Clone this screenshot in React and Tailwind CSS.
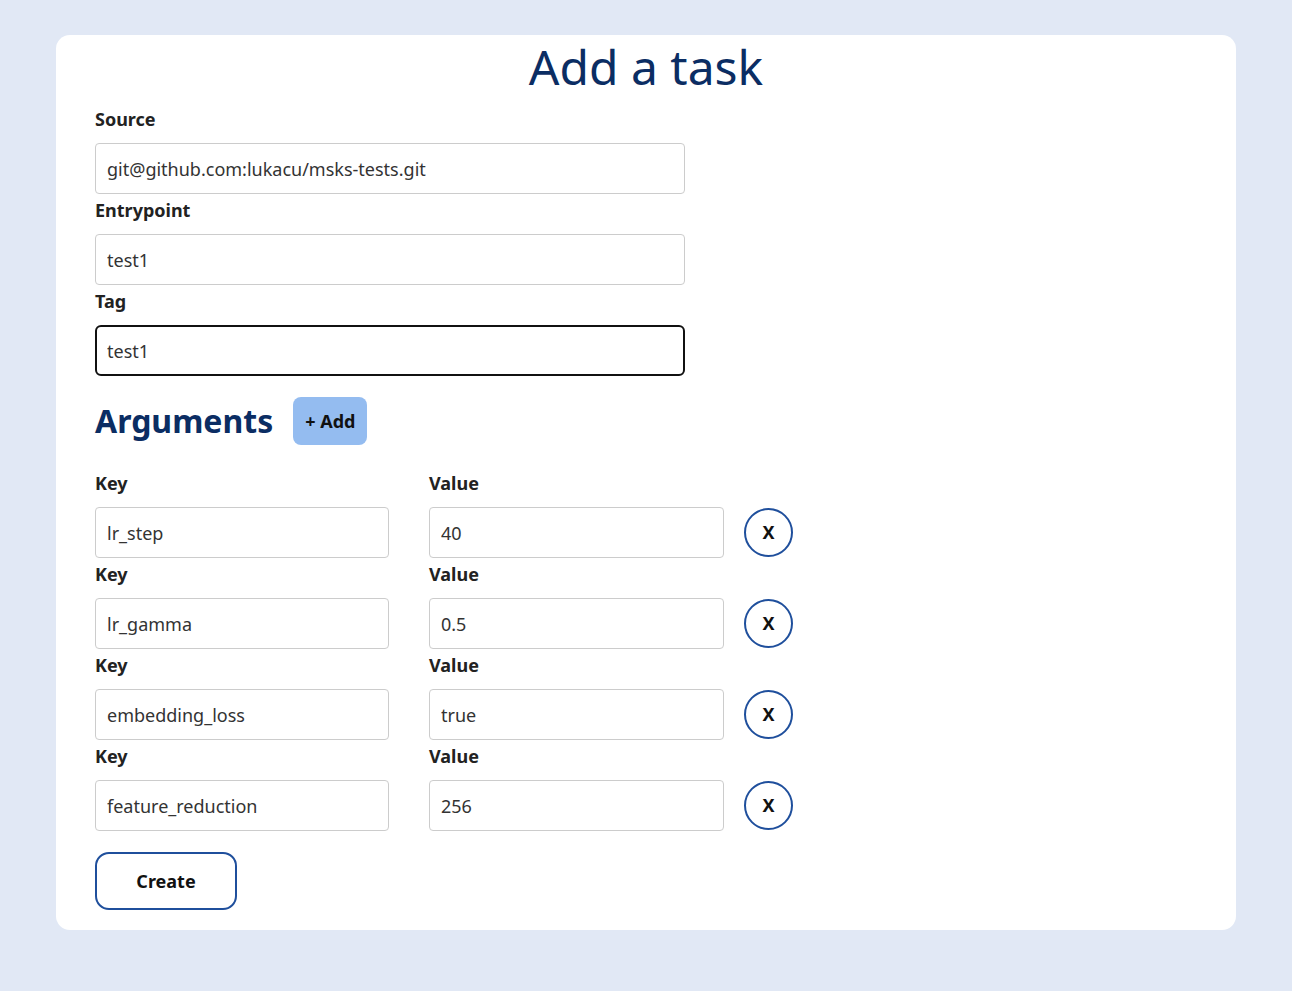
import { useState } from "react";

const FONT = { fontFamily: '"Noto Sans", "Open Sans", sans-serif' };

function Field({ label, value, onChange, focused }) {
  return (
    <div className="flex flex-col">
      <label className="text-[18px] font-bold text-[#222] leading-6 mt-1 mb-3">{label}</label>
      <input
        value={value}
        onChange={(e) => onChange(e.target.value)}
        className={
          focused
            ? "w-[590px] h-[51px] px-[10px] text-[18px] text-[#333] bg-white border-2 border-[#111] rounded-[6px] outline-none"
            : "w-[590px] h-[51px] px-[11px] text-[18px] text-[#333] bg-white border border-[#ccc] rounded-[4px] outline-none"
        }
      />
    </div>
  );
}

export default function App() {
  const [source, setSource] = useState("git@github.com:lukacu/msks-tests.git");
  const [entry, setEntry] = useState("test1");
  const [tag, setTag] = useState("test1");
  const [args, setArgs] = useState([
    { k: "lr_step", v: "40" },
    { k: "lr_gamma", v: "0.5" },
    { k: "embedding_loss", v: "true" },
    { k: "feature_reduction", v: "256" },
  ]);

  const update = (i, field, val) =>
    setArgs((prev) => prev.map((a, j) => (j === i ? { ...a, [field]: val } : a)));

  return (
    <div className="min-h-[991px] bg-[#e1e8f5] pt-[35px]" style={FONT}>
      <div className="w-[1180px] mx-auto bg-white rounded-[14px] px-[39px] pb-[20px]">
        <h1 className="text-center text-[48px] leading-[64px] text-[#0b2d63] font-normal mb-1">Add a task</h1>

        <Field label="Source" value={source} onChange={setSource} />
        <Field label="Entrypoint" value={entry} onChange={setEntry} />
        <Field label="Tag" value={tag} onChange={setTag} focused />

        <div className="flex items-center gap-5 mt-[21px]">
          <h2 className="text-[32px] font-bold text-[#0b2d63] leading-[48px]">Arguments</h2>
          <button
            type="button"
            onClick={() => setArgs((p) => [...p, { k: "", v: "" }])}
            className="h-[48px] px-[12px] rounded-[8px] bg-[#94bcf0] text-[18px] font-bold text-[#111]"
          >
            + Add
          </button>
        </div>

        <div className="mt-[22px] flex flex-col">
          {args.map((a, i) => (
            <div key={i} className="flex items-end gap-[40px]">
              <div className="flex flex-col">
                <label className="text-[18px] font-bold text-[#222] leading-6 mt-1 mb-3">Key</label>
                <input
                  value={a.k}
                  onChange={(e) => update(i, "k", e.target.value)}
                  className="w-[294px] h-[51px] px-[11px] text-[18px] text-[#333] border border-[#ccc] rounded-[4px] outline-none"
                />
              </div>
              <div className="flex flex-col">
                <label className="text-[18px] font-bold text-[#222] leading-6 mt-1 mb-3">Value</label>
                <input
                  value={a.v}
                  onChange={(e) => update(i, "v", e.target.value)}
                  className="w-[295px] h-[51px] px-[11px] text-[18px] text-[#333] border border-[#ccc] rounded-[4px] outline-none"
                />
              </div>
              <button
                type="button"
                onClick={() => setArgs((p) => p.filter((_, j) => j !== i))}
                className="-ml-5 mb-[1px] w-[49px] h-[49px] rounded-full border-2 border-[#1f4f9c] bg-white text-[18px] font-bold text-[#111] flex items-center justify-center"
              >
                X
              </button>
            </div>
          ))}
        </div>

        <button
          type="button"
          className="mt-[21px] w-[142px] h-[58px] rounded-[14px] border-2 border-[#1f4f9c] bg-white text-[18px] font-bold text-[#111]"
        >
          Create
        </button>
      </div>
    </div>
  );
}
